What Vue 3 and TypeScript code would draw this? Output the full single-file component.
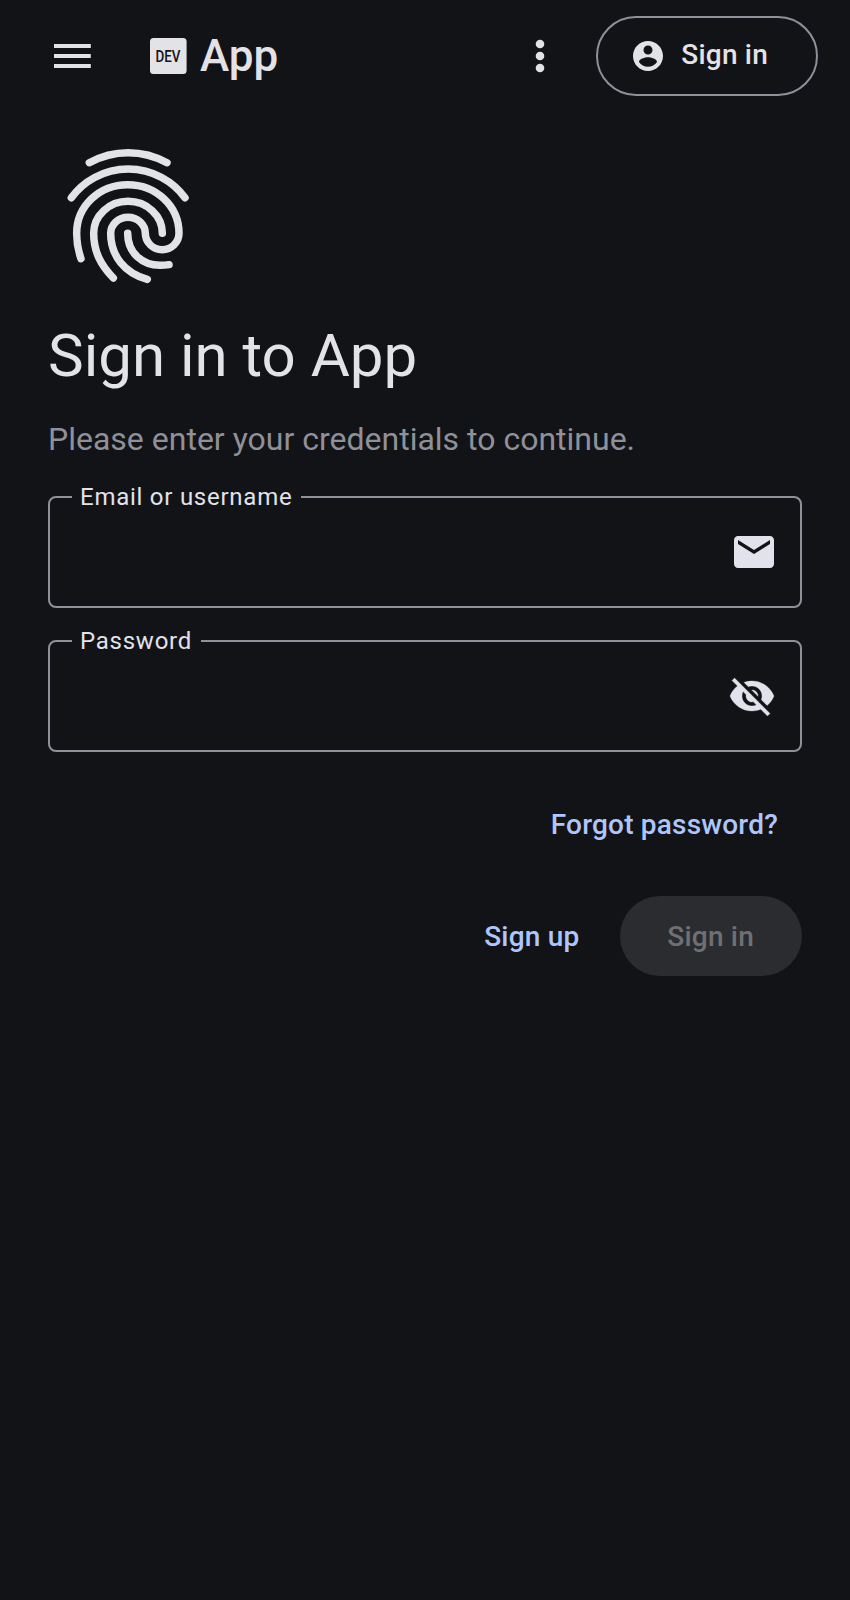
<script setup lang="ts">
import { ref } from 'vue'

interface Field {
  id: string
  label: string
  type: string
  icon: string
  iconClass: string
}

const fields: Field[] = [
  {
    id: 'user',
    label: 'Email or username',
    type: 'text',
    iconClass: 'mail',
    icon: 'M20 4H4c-1.1 0-2 .9-2 2v12c0 1.1.9 2 2 2h16c1.1 0 2-.9 2-2V6c0-1.1-.9-2-2-2zm0 4l-8 5-8-5V6l8 5 8-5v2z',
  },
  {
    id: 'password',
    label: 'Password',
    type: 'password',
    iconClass: 'visibility',
    icon: 'M12 7c2.76 0 5 2.24 5 5 0 .65-.13 1.26-.36 1.83l2.92 2.92c1.51-1.26 2.7-2.89 3.43-4.75-1.73-4.39-6-7.5-11-7.5-1.4 0-2.74.25-3.98.7l2.16 2.16C10.74 7.13 11.35 7 12 7zM2 4.27l2.28 2.28.46.46C3.08 8.3 1.78 10.02 1 12c1.73 4.39 6 7.5 11 7.5 1.55 0 3.03-.3 4.38-.84l.42.42L19.73 22 21 20.73 3.27 3 2 4.27zM7.53 9.8l1.55 1.55c-.05.21-.08.43-.08.65 0 1.66 1.34 3 3 3 .22 0 .44-.03.65-.08l1.55 1.55c-.67.33-1.41.53-2.2.53-2.76 0-5-2.24-5-5 0-.79.2-1.53.53-2.2zm4.31-.78l3.15 3.15.02-.16c0-1.66-1.34-3-3-3l-.17.01z',
  },
]

const values = ref<Record<string, string>>({ user: '', password: '' })
</script>

<template>
  <div class="page">
    <header class="bar">
      <button class="icon-button" aria-label="Menu">
        <svg class="icon" viewBox="0 0 24 24"><path d="M3 18h18.4v-2H3v2zm0-5h18.4v-2H3v2zm0-7v2h18.4V6H3z" /></svg>
      </button>
      <div class="brand">
        <svg class="icon" viewBox="0 0 48 48">
          <rect x="6" y="6" width="36.6" height="36" rx="3.5" />
          <text class="dev" x="11.4" y="30" textLength="25" lengthAdjust="spacingAndGlyphs">DEV</text>
        </svg>
        <span class="title">App</span>
      </div>
      <button class="icon-button more" aria-label="More">
        <svg class="icon" viewBox="0 0 24 24">
          <circle cx="12" cy="6" r="2.15" /><circle cx="12" cy="12" r="2.15" /><circle cx="12" cy="18" r="2.15" />
        </svg>
      </button>
      <button class="button outlined">
        <svg class="account" viewBox="0 0 24 24">
          <path d="M12 2C6.48 2 2 6.48 2 12s4.48 10 10 10 10-4.48 10-10S17.52 2 12 2zm0 3c1.66 0 3 1.34 3 3s-1.34 3-3 3-3-1.34-3-3 1.34-3 3-3zm0 14.2c-2.5 0-4.71-1.28-6-3.22.03-1.99 4-3.08 6-3.08 1.99 0 5.97 1.09 6 3.08-1.29 1.94-3.5 3.22-6 3.22z" />
        </svg>
        <span class="account-label">Sign in</span>
      </button>
    </header>

    <main class="content">
      <svg class="fingerprint" viewBox="24 18 480 480">
        <path d="M148 98A241 241 0 0 1 381 98" />
        <path d="M94 203A212 212 0 0 1 435 203" />
        <path d="M123 386Q110 349 110 310C110 228 178 164 263 164S417 228 417 310A50.5 49 0 0 1 316 310A51.5 48 0 0 0 212 310C212 378 255 430 322 448" />
        <path d="M220 444C183 405 161 366 161 310C161 257 207 214 264 214S367 257 367 310" />
        <path d="M263 310C263 370 308 406 360 406Q374 406 387 404" />
      </svg>
      <h1 class="headline">Sign in to App</h1>
      <p class="hint">Please enter your credentials to continue.</p>

      <form class="form" @submit.prevent>
        <fieldset v-for="field in fields" :key="field.id" class="field">
          <legend class="legend"><label :for="field.id">{{ field.label }}</label></legend>
          <div class="row">
            <input :id="field.id" v-model="values[field.id]" class="input" :type="field.type" />
            <svg class="icon" :class="field.iconClass" viewBox="0 0 24 24"><path :d="field.icon" /></svg>
          </div>
        </fieldset>

        <div class="actions forgot">
          <button type="button" class="button text">Forgot password?</button>
        </div>
        <div class="actions">
          <button type="button" class="button text">Sign up</button>
          <button type="submit" class="button filled" disabled>Sign in</button>
        </div>
      </form>
    </main>
  </div>
</template>

<style>
html,
body {
  background: #121316;
}
</style>

<style scoped>
.page {
  box-sizing: border-box;
  min-height: 1600px;
  background: #121316;
  color: #e3e2e6;
  font-family: Roboto, "Liberation Sans", sans-serif;
}

.bar {
  box-sizing: border-box;
  display: flex;
  align-items: center;
  height: 112px;
  padding: 0 32px 0 24px;
}

.icon-button {
  display: flex;
  align-items: center;
  justify-content: center;
  width: 96px;
  height: 96px;
  padding: 0;
  border: 0;
  background: transparent;
  color: inherit;
}

.icon {
  display: block;
  flex: none;
  width: 48px;
  height: 48px;
  fill: #e3e2e6;
}

.brand {
  display: flex;
  flex: 1;
  align-items: center;
  gap: 8px;
  padding-left: 24px;
}

.dev {
  fill: #121316;
  font-size: 17px;
  font-weight: 500;
}

.title {
  font-size: 44px;
  font-weight: 500;
  line-height: 56px;
}

.more {
  margin-right: 8px;
}

.button {
  box-sizing: border-box;
  display: flex;
  align-items: center;
  height: 80px;
  padding: 2px 48px 0;
  border: 0;
  border-radius: 40px;
  background: transparent;
  font-family: inherit;
  font-size: 28px;
  font-weight: 500;
  line-height: 40px;
  letter-spacing: 0.2px;
  white-space: nowrap;
}

.outlined {
  gap: 15px;
  padding: 0 48px 0 32px;
  border: 2px solid #8f9099;
  color: #e3e2e6;
}

.account {
  width: 36px;
  height: 36px;
  fill: #e3e2e6;
}

.account-label {
  padding-bottom: 2px;
}

.text {
  padding: 2px 24px 0;
  color: #adc6ff;
}

.filled {
  padding-left: 47px;
  background: #2b2c2f;
  color: #6f7073;
}

.content {
  padding: 24px 48px 0;
}

.fingerprint {
  display: block;
  width: 160px;
  height: 160px;
  fill: none;
  stroke: #e3e2e6;
  stroke-width: 22.5;
  stroke-linecap: round;
  stroke-linejoin: round;
}

.headline {
  margin: 24px 0 0;
  font-size: 60px;
  font-weight: 400;
  line-height: 72px;
}

.hint {
  margin: 23px 0 0;
  color: #8f9099;
  font-size: 32px;
  line-height: 48px;
}

.form {
  display: flex;
  flex-direction: column;
  margin-top: 21px;
}

.field {
  box-sizing: border-box;
  min-width: 0;
  height: 124px;
  margin: 0 0 20px;
  padding: 0 22px;
  border: 2px solid #8f9099;
  border-radius: 8px;
}

.legend {
  height: 26px;
  padding: 0 8.5px 0 8px;
  font-size: 24px;
  line-height: 26px;
  letter-spacing: 0.75px;
  color: #e1e2ec;
}

.row {
  display: flex;
  align-items: center;
  height: 84px;
}

.input {
  flex: 1;
  min-width: 0;
  padding: 0 8px;
  border: 0;
  outline: 0;
  background: transparent;
  color: inherit;
  font: inherit;
  font-size: 32px;
}

.mail,
.visibility {
  fill: #e1e2ec;
}

.visibility {
  margin-right: 2px;
  stroke: #e1e2ec;
  stroke-width: 0.15;
}

.actions {
  display: flex;
  justify-content: flex-end;
  gap: 17px;
}

.forgot {
  margin: 12px 0 32px;
}
</style>
